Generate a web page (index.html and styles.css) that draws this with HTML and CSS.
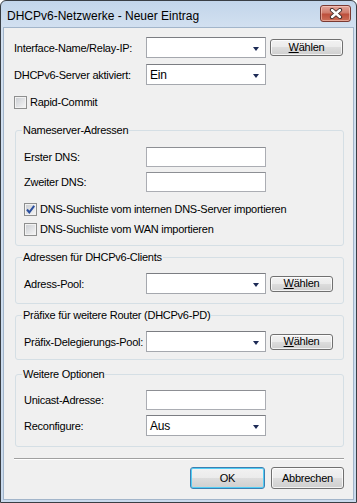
FILE: index.html
```html
<!DOCTYPE html>
<html>
<head>
  <title>DHCPv6-Netzwerke - Neuer Eintrag</title>
  <meta name="viewport" content="width=device-width, initial-scale=1.0">
  <link rel="stylesheet" href="styles.css">
</head>
<body>
  <div class="window">
    <div class="titlebar">
      <span class="title">DHCPv6-Netzwerke - Neuer Eintrag</span>
      <span class="close">
        <svg width="14" height="11" viewBox="0 0 14 11">
          <path d="M3 2 L11 9 M11 2 L3 9" stroke="#3b2a28" stroke-width="4.2" stroke-linecap="round"/>
          <path d="M3 2 L11 9 M11 2 L3 9" stroke="#ffffff" stroke-width="2.4" stroke-linecap="round"/>
        </svg>
      </span>
    </div>

    <div class="client">
      <div class="top-fields">
        <div class="field">
          <span class="label label-wide">Interface-Name/Relay-IP:</span>
          <div class="combo"><span class="value"></span><span class="arrow"></span></div>
          <button class="btn btn-pick"><u>W</u>ählen</button>
        </div>
        <div class="field">
          <span class="label label-wide">DHCPv6-Server aktiviert:</span>
          <div class="combo"><span class="value">Ein</span><span class="arrow"></span></div>
        </div>
      </div>

      <label class="check check-top"><span class="box"></span>Rapid-Commit</label>

      <fieldset class="group group-dns">
        <legend>Nameserver-Adressen</legend>
        <div class="group-fields">
          <div class="field field-edit">
            <span class="label">Erster DNS:</span>
            <div class="edit"></div>
          </div>
          <div class="field field-edit">
            <span class="label">Zweiter DNS:</span>
            <div class="edit"></div>
          </div>
        </div>
        <div class="checks">
          <label class="check"><span class="box box-checked"><svg width="11" height="11" viewBox="0 0 11 11"><path d="M2 5.5 L4.3 8.3 L9.2 1.8" fill="none" stroke="#2b4f9e" stroke-width="2"/></svg></span>DNS-Suchliste vom internen DNS-Server importieren</label>
          <label class="check"><span class="box"></span>DNS-Suchliste vom WAN importieren</label>
        </div>
      </fieldset>

      <fieldset class="group group-clients">
        <legend>Adressen für DHCPv6-Clients</legend>
        <div class="field">
          <span class="label">Adress-Pool:</span>
          <div class="combo"><span class="value"></span><span class="arrow"></span></div>
          <button class="btn btn-pick btn-small"><u>W</u>ählen</button>
        </div>
      </fieldset>

      <fieldset class="group group-pd">
        <legend>Präfixe für weitere Router (DHCPv6-PD)</legend>
        <div class="field">
          <span class="label">Präfix-Delegierungs-Pool:</span>
          <div class="combo"><span class="value"></span><span class="arrow"></span></div>
          <button class="btn btn-pick btn-small"><u>W</u>ählen</button>
        </div>
      </fieldset>

      <fieldset class="group group-more">
        <legend>Weitere Optionen</legend>
        <div class="group-fields">
          <div class="field field-edit">
            <span class="label">Unicast-Adresse:</span>
            <div class="edit"></div>
          </div>
          <div class="field">
            <span class="label">Reconfigure:</span>
            <div class="combo"><span class="value">Aus</span><span class="arrow"></span></div>
          </div>
        </div>
      </fieldset>

      <div class="separator"></div>

      <div class="footer">
        <button class="btn btn-ok">OK</button>
        <button class="btn btn-cancel">Abbrechen</button>
      </div>
    </div>
  </div>
</body>
</html>
```

FILE: styles.css
```css
body {
  margin: 0;
  font-family: "Liberation Sans", Arial, sans-serif;
  font-size: 11px;
  letter-spacing: -0.25px;
  color: #000;
  background: #ffffff;
}
.window {
  width: 357px;
  height: 503px;
  box-sizing: border-box;
  border: 1px solid #393e44;
  border-radius: 6px 6px 0 0;
  background: linear-gradient(#c2d5ea, #d2e0f0 26px, #c9daed);
  padding: 0 2px 2px;
  display: flex;
  flex-direction: column;
}
.titlebar {
  height: 26px;
  display: flex;
  justify-content: space-between;
  align-items: flex-start;
  padding-left: 4px;
}
.title {
  font-size: 12px;
  letter-spacing: 0;
  line-height: 14px;
  margin-top: 8px;
  color: #000;
}
.close {
  width: 31px;
  height: 17px;
  box-sizing: border-box;
  margin-top: 4px;
  margin-right: 3px;
  border: 1px solid #7a3a33;
  border-radius: 3px;
  background: linear-gradient(#e3a59a, #cf7c6c 45%, #bd4f3c 55%, #cc6f58);
  box-shadow: inset 0 0 0 1px rgba(255, 220, 210, 0.5);
  display: flex;
  justify-content: center;
  align-items: center;
}
.client {
  flex: 1;
  background: #f0f0f0;
  border: 1px solid #a2b5ca;
  padding: 9px 9px 9px 10px;
  display: flex;
  flex-direction: column;
}
.top-fields {
  display: flex;
  flex-direction: column;
  gap: 6px;
}
.field {
  display: flex;
  align-items: center;
  height: 21px;
}
.field-edit {
  height: 20px;
}
.label {
  width: 122px;
  line-height: 14px;
  white-space: nowrap;
}
.label-wide {
  width: 132px;
}
.combo {
  width: 120px;
  height: 21px;
  box-sizing: border-box;
  background: #fff;
  border: 1px solid #a5a8ae;
  border-top-color: #7b7d82;
  padding: 0 6px 0 3px;
  display: flex;
  align-items: center;
}
.value {
  flex: 1;
  font-size: 12px;
  line-height: 14px;
  margin-top: 1px;
}
.arrow {
  width: 0;
  height: 0;
  margin-top: 3px;
  border-left: 3.5px solid transparent;
  border-right: 3.5px solid transparent;
  border-top: 4px solid #1c2a55;
}
.edit {
  width: 120px;
  height: 20px;
  box-sizing: border-box;
  background: #fff;
  border: 1px solid #abadb3;
  border-top-color: #8d8f94;
}
.btn {
  font-family: inherit;
  font-size: 11px;
  letter-spacing: -0.25px;
  color: #000;
  height: 17px;
  box-sizing: border-box;
  padding: 0;
  border: 1px solid #707070;
  border-radius: 3px;
  background: linear-gradient(#f2f2f2, #ebebeb 50%, #dddddd 50%, #cfcfcf);
  box-shadow: inset 0 0 0 1px rgba(255, 255, 255, 0.75);
  line-height: 13px;
}
.btn-pick {
  width: 73px;
  margin-left: 4px;
}
.btn-small {
  width: 63px;
  height: 16px;
}
.check {
  display: flex;
  align-items: center;
  height: 20px;
  gap: 3px;
  line-height: 14px;
}
.check-top {
  margin-top: 7px;
}
.box {
  width: 13px;
  height: 13px;
  box-sizing: border-box;
  border: 1px solid #8e8f8f;
  background: linear-gradient(135deg, #c9ccd1, #f7f7f7);
  box-shadow: inset 0 0 0 1px #f2f2f2;
  display: flex;
  align-items: center;
  justify-content: center;
}
.group {
  margin: 0 0 0 1px;
  padding: 10px 8px 6px 8px;
  border: 1px solid #d5dfe5;
  border-radius: 3px;
  min-width: 0;
}
.group legend {
  padding: 0 1px;
  margin-left: -2px;
  line-height: 14px;
}
.group-dns {
  margin-top: 11px;
}
.group-clients {
  margin-top: 4px;
  padding-top: 9px;
  padding-bottom: 9px;
}
.group-pd {
  margin-top: 4px;
  padding-top: 9px;
  padding-bottom: 7px;
}
.group-more {
  margin-top: 7px;
  padding-top: 9px;
  padding-bottom: 10px;
}
.group-fields {
  display: flex;
  flex-direction: column;
  gap: 5px;
}
.checks {
  margin-top: 7px;
}
.separator {
  margin-top: 11px;
  border-top: 1px solid #a0a0a0;
  border-bottom: 1px solid #ffffff;
}
.footer {
  margin-top: 7px;
  display: flex;
  justify-content: flex-end;
  gap: 6px;
}
.btn-ok {
  width: 75px;
  height: 22px;
  border-color: #3c7fb1;
  box-shadow: inset 0 0 0 1px #52cdf5;
}
.btn-cancel {
  width: 73px;
  height: 22px;
}
```
